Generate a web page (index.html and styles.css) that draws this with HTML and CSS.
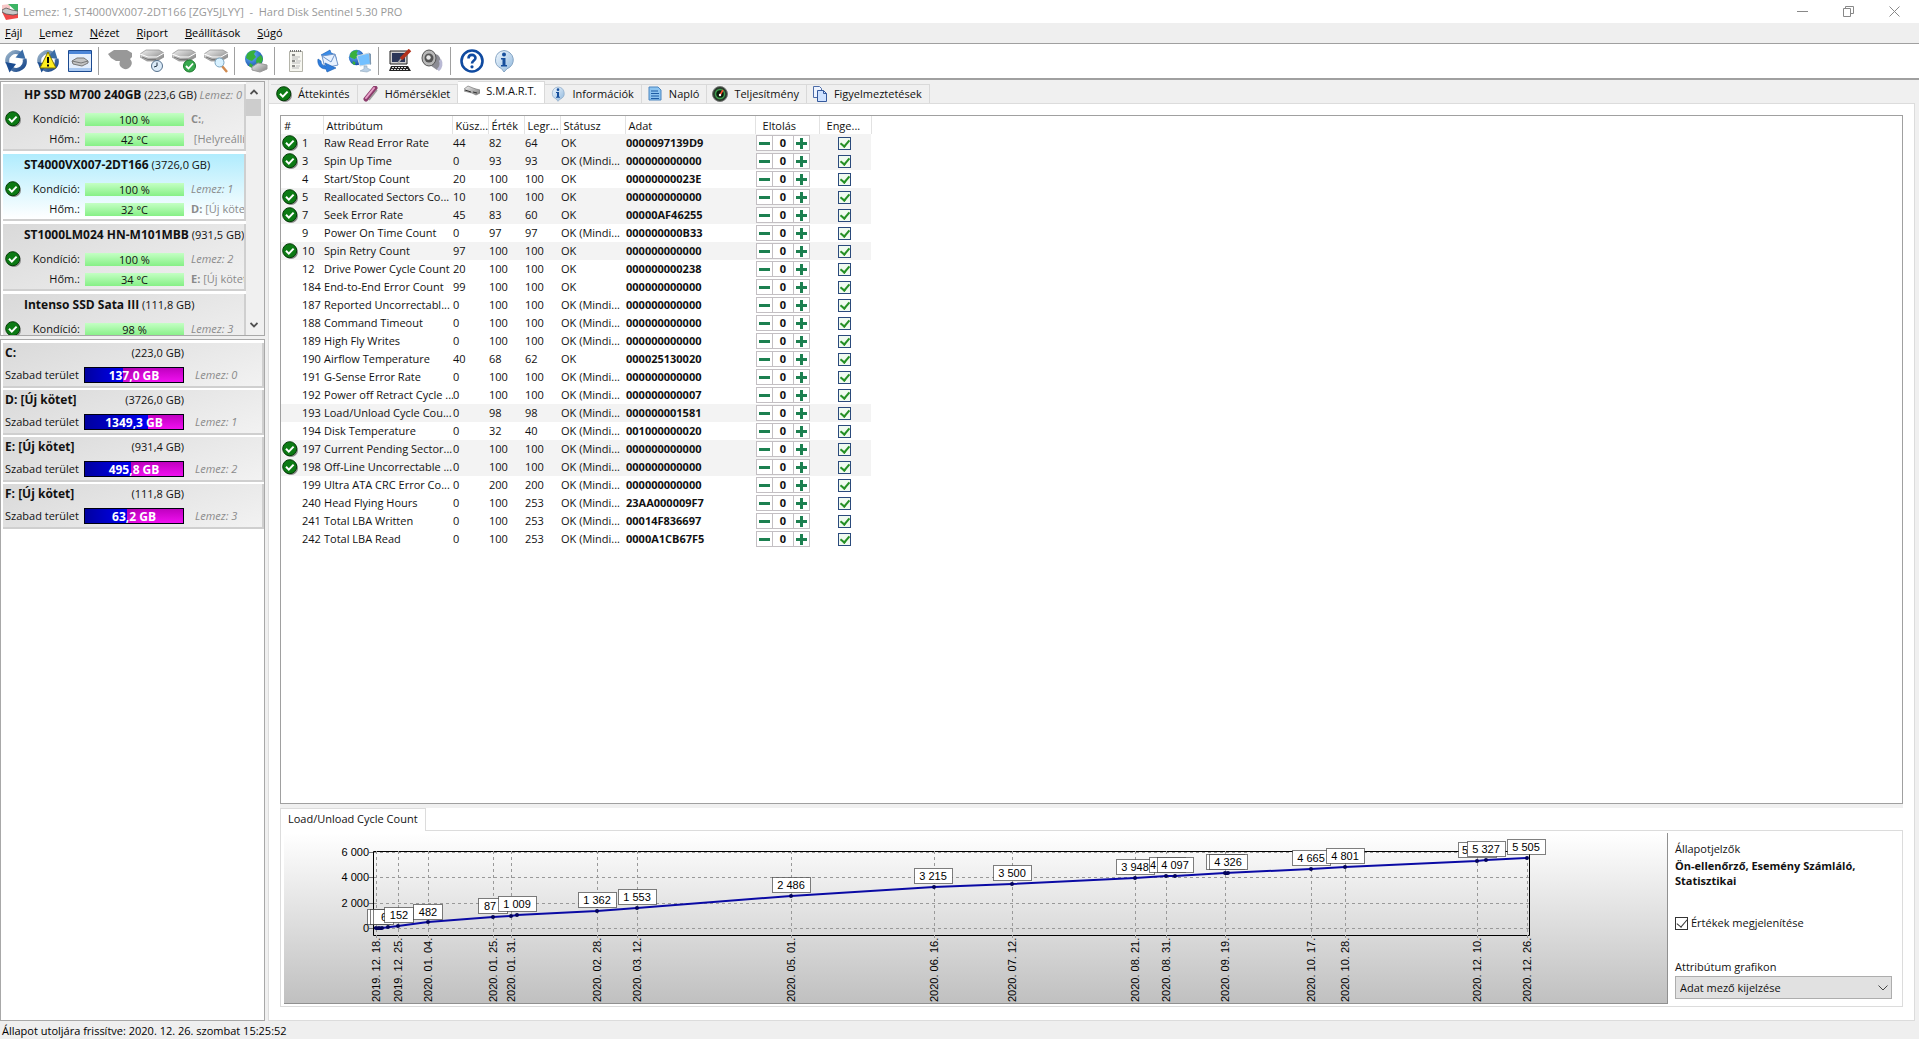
FILE: index.html
```html
<!DOCTYPE html>
<html lang="hu">
<head>
<meta charset="utf-8">
<title>Hard Disk Sentinel 5.30 PRO</title>
<link rel="stylesheet" href="styles.css">
</head>
<body>
<svg class="defs" aria-hidden="true">
  <defs>
    <linearGradient id="gBlue" gradientUnits="userSpaceOnUse" x1="2" y1="2" x2="22" y2="22"><stop offset="0" stop-color="#9fb8cc"/><stop offset="1" stop-color="#0e3f86"/></linearGradient>
    <linearGradient id="gDisk" x1="0" y1="0" x2="1" y2="1"><stop offset="0" stop-color="#f2f2f2"/><stop offset="1" stop-color="#7c7c7c"/></linearGradient>
    <linearGradient id="gBubble" x1="0" y1="0" x2="1" y2="1"><stop offset="0" stop-color="#f4faff"/><stop offset="1" stop-color="#8db6dc"/></linearGradient>
    <radialGradient id="gGlobe" cx=".35" cy=".3" r=".8"><stop offset="0" stop-color="#6fc0ff"/><stop offset="1" stop-color="#0b3fa0"/></radialGradient>
  </defs>
  <symbol id="ok" viewBox="0 0 16 16"><circle cx="9" cy="9" r="7" fill="#8a8a8a"/><circle cx="7.700" cy="7.700" r="7" fill="#0c7a14" stroke="#033c06"/><path d="M4 7.800l2.800 2.800 4.800-5" fill="none" stroke="#fff" stroke-width="2"/></symbol>
  <symbol id="refresh" viewBox="0 0 24 24"><path d="M3.500 14A8.600 8.600 0 0 1 16 4.300" fill="none" stroke="url(#gBlue)" stroke-width="4"/><path d="M18.500 0.500L21.500 10 11.500 8.500z" fill="#3a6ca6"/><path d="M20.500 10A8.600 8.600 0 0 1 8 19.700" fill="none" stroke="url(#gBlue)" stroke-width="4"/><path d="M5.500 23.500L1.500 13 12 15z" fill="#1b4c90"/></symbol>
  <symbol id="disk" viewBox="0 0 24 24"><path d="M0 5l6-4h13l5 3v4l-7 4H7L0 8z" fill="url(#gDisk)" stroke="#8a8a8a" stroke-width=".7"/><path d="M0 5l8 3h9l7-4" fill="none" stroke="#fff"/><path d="M2 8l6 2.500h8" fill="none" stroke="#777" stroke-width="1"/></symbol>
  <symbol id="smalldisk" viewBox="0 0 16 16"><path d="M0 6l4-3 5 2 3 1 4 1v3l-4 2-4-2-4-1-4-1z" fill="url(#gDisk)" stroke="#777" stroke-width=".7"/><path d="M1 7l6 2M9 9l4 1" stroke="#333" fill="none"/></symbol>
  <symbol id="globe" viewBox="0 0 20 20"><circle cx="10" cy="10" r="9" fill="url(#gGlobe)"/><path d="M3 5c3-4 7-4 9-3l-2 3 2 3-4 4-3-1-3-2zM13 9l4-3 2 4-2 5-4 1-1-4zM6 14l3 2-1 3-3-2z" fill="#38b03c"/></symbol>
  <symbol id="info" viewBox="0 0 24 24"><path d="M12 1.500a10 9.500 0 0 1 3 18.300L12 23l-2.500-3.400A10 9.500 0 0 1 12 1.500z" fill="url(#gBubble)" stroke="#86a5c4"/><circle cx="12" cy="5.500" r="2" fill="#174f9c"/><path d="M9 9h4.500v7H15v1.500H9V16h1.500v-5.500H9z" fill="#174f9c"/></symbol>
</svg>

<div class="app">
  <header class="titlebar">
    <svg class="app-icon" viewBox="0 0 16 16"><path d="M0 1l8-1v8H0z" fill="#f8c8c8"/><path d="M6 0h10v9z" fill="#3cb464"/><path d="M0 8h16v6l-12 2z" fill="#f04848"/><path d="M0 6l4-2 6 2 6 1v3l-5 1-7-1-4-2z" fill="#c8c8c8" stroke="#555" stroke-width=".8"/></svg>
    <h1 class="title">Lemez: 1, ST4000VX007-2DT166 [ZGY5JLYY] &nbsp;- &nbsp;Hard Disk Sentinel 5.30 PRO</h1>
    <div class="window-buttons">
      <button type="button" aria-label="Kis méret"><svg viewBox="0 0 11 11"><path d="M0 5.500h11" stroke="#888" fill="none"/></svg></button>
      <button type="button" aria-label="Előző méret"><svg viewBox="0 0 11 11"><path d="M.5 2.500h7v8h-7zM2.500 2.500v-2h8v7h-3" stroke="#888" fill="none"/></svg></button>
      <button type="button" aria-label="Bezárás"><svg viewBox="0 0 11 11"><path d="M.5.500l10 10M10.500.500l-10 10" stroke="#888" fill="none"/></svg></button>
    </div>
  </header>

  <nav class="menu">
    <a href="#"><u>F</u>ájl</a><a href="#"><u>L</u>emez</a><a href="#"><u>N</u>ézet</a><a href="#"><u>R</u>iport</a><a href="#"><u>B</u>eállítások</a><a href="#"><u>S</u>úgó</a>
  </nav>

  <div class="toolbar">
    <button type="button" aria-label="Frissítés"><svg viewBox="0 0 24 24"><use href="#refresh"/></svg></button>
    <button type="button" aria-label="Figyelmeztetés"><svg viewBox="0 0 24 24"><use href="#refresh"/><path d="M12 3l8 16H4z" fill="#ffef20" stroke="#807400"/><path d="M12 8v6M12 15.500v2" stroke="#000" stroke-width="2"/></svg></button>
    <button type="button" aria-label="Lemez"><svg viewBox="0 0 24 24"><path d="M.5 1.500h23v21H.5z" fill="#e4eefc" stroke="#1c4a90"/><path d="M1 2h22v3H1z" fill="#4c86d8"/><path d="M1 19h22v3H1z" fill="#a9c8f0"/><path d="M4 12l5-3h7l4 3v2l-6 3-9-2z" fill="#c4c4c4" stroke="#777"/><path d="M4 12l9 2 7-2" stroke="#777" fill="none"/></svg></button>
    <span class="sep"></span>
    <button type="button" aria-label="Leállítva"><svg viewBox="0 0 24 24"><path d="M0 5l6-4h13l5 3v4l-2 2a6 6 0 1 1-10 2H8L3 9z" fill="#989898"/></svg></button>
    <button type="button" aria-label="Ütemezés"><svg viewBox="0 0 24 24"><use href="#disk"/><circle cx="17" cy="17" r="5.500" fill="#dcebf8" stroke="#55708c"/><path d="M17 13.500V17l-3 1" stroke="#234" fill="none"/></svg></button>
    <button type="button" aria-label="Teszt"><svg viewBox="0 0 24 24"><use href="#disk"/><circle cx="17.500" cy="17" r="6" fill="#37a94d" stroke="#19772b"/><path d="M14 17l2.500 2.500 4.500-5" stroke="#fff" stroke-width="1.800" fill="none"/></svg></button>
    <button type="button" aria-label="Keresés"><svg viewBox="0 0 24 24"><use href="#disk"/><path d="M18 17l5 6" stroke="#d08a50" stroke-width="2.500"/><circle cx="15.500" cy="13.500" r="4.500" fill="#d8f1ff" stroke="#7aa4c0"/></svg></button>
    <span class="sep"></span>
    <button type="button" aria-label="Hálózat"><svg viewBox="0 0 24 24"><use href="#globe" width="20" height="20"/><path d="M8 18l6-4 9 2v4l-7 3-8-2z" fill="url(#gDisk)" stroke="#999"/></svg></button>
    <span class="sep"></span>
    <button type="button" aria-label="Riport"><svg viewBox="0 0 24 24"><path d="M5.500 2.500h13v20h-13z" fill="#f6f6f0" stroke="#b4b4aa"/><path d="M6 2h12" stroke="#777" stroke-width="2" stroke-dasharray="1 1"/><path d="M8 6h3M8 12h3M8 17h3" stroke="#222"/><path d="M8 8h8M8 10h6M12 12h5M8 14h8M12 17h4M8 19h7" stroke="#bbb"/></svg></button>
    <button type="button" aria-label="Küldés"><svg viewBox="0 0 24 24"><path d="M5 6l9-5 1 3c5 1 6 6 5 9l-3-2c1-3-1-4-3-4l1 3z" fill="#3a8ce8" stroke="#155bb0" stroke-width=".6"/><path d="M6 7l13-2 3 11-13 3z" fill="#e8f2ff" stroke="#6f94c8"/><path d="M6 7l9 6 4-8" fill="none" stroke="#6f94c8"/><path d="M20 19l-9 4-1-3c-6 0-9-5-8-10l3 2c0 3 2 5 5 5l-1-3z" fill="#2d7cdc" stroke="#155bb0" stroke-width=".6"/></svg></button>
    <button type="button" aria-label="Távoli gép"><svg viewBox="0 0 24 24"><use href="#globe" width="17" height="17"/><path d="M9 7l12-3 2 11-11 2z" fill="#73c0ff" stroke="#cfd8e0"/><path d="M21 4l2 1v10l-1 1z" fill="#7d97b0"/><path d="M16 17v3l-4 2 7 1 4-2-4-2v-2z" fill="#b9cfe4" stroke="#8fa8c0" stroke-width=".6"/></svg></button>
    <span class="sep"></span>
    <button type="button" aria-label="Beállítások"><svg viewBox="0 0 24 24"><path d="M2 2h17v13H2z" fill="#d0d0d0" stroke="#222"/><path d="M4 4h13v9H4z" fill="#2a3658"/><path d="M3 17h17l3 5H1z" fill="#222"/><path d="M4 18.500h15M3 20.500h17" stroke="#ddd" stroke-dasharray="2 1"/><path d="M22 1l-9 9" stroke="#b2321c" stroke-width="3.500"/><path d="M13 10l-3 4" stroke="#aaa" stroke-width="1.600"/></svg></button>
    <button type="button" aria-label="Hang"><svg viewBox="0 0 24 24"><path d="M8 2l10 4c5 5 3 13-1 15L7 14z" fill="#8c8c94"/><path d="M20 11c2 3 1 8-2 10" stroke="#b9b9d4" stroke-width="3" fill="none"/><ellipse cx="9" cy="9" rx="7" ry="8" fill="#b8b8b8" stroke="#555"/><circle cx="9" cy="9" r="4.500" fill="#555"/><circle cx="8.500" cy="8.500" r="2.200" fill="#e8e8e8"/></svg></button>
    <span class="sep"></span>
    <button type="button" aria-label="Súgó"><svg viewBox="0 0 24 24"><circle cx="12" cy="12" r="10.500" fill="#fff" stroke="#0f4aa0" stroke-width="2.600"/><path d="M8.500 9.500c0-5 7-4.500 7-.5 0 2.500-3.500 2.500-3.500 5.500" fill="none" stroke="#0f4aa0" stroke-width="2.600"/><circle cx="12" cy="17.800" r="1.600" fill="#0f4aa0"/></svg></button>
    <button type="button" aria-label="Információ"><svg viewBox="0 0 24 24"><use href="#info"/></svg></button>
  </div>

  <main class="main">
    <aside class="sidebar">
      <section class="disk-list">
        <div class="disks">
          <article class="disk">
            <h2 class="disk-name"><b>HP SSD M700 240GB</b> (223,6 GB) <i>Lemez: 0</i></h2>
            <svg class="ok"><use href="#ok"/></svg>
            <span class="lbl">Kondíció:</span><span class="bar">100 %</span><span class="note"><b>C:</b>,</span>
            <span class="lbl">Hőm.:</span><span class="bar">42 °C</span><span class="note">&nbsp;[Helyreállítás]</span>
          </article>
          <article class="disk selected">
            <h2 class="disk-name"><b>ST4000VX007-2DT166</b> (3726,0 GB)</h2>
            <svg class="ok"><use href="#ok"/></svg>
            <span class="lbl">Kondíció:</span><span class="bar">100 %</span><span class="note"><i>Lemez: 1</i></span>
            <span class="lbl">Hőm.:</span><span class="bar">32 °C</span><span class="note"><b>D:</b> [Új kötet]</span>
          </article>
          <article class="disk">
            <h2 class="disk-name"><b>ST1000LM024 HN-M101MBB</b> (931,5 GB)</h2>
            <svg class="ok"><use href="#ok"/></svg>
            <span class="lbl">Kondíció:</span><span class="bar">100 %</span><span class="note"><i>Lemez: 2</i></span>
            <span class="lbl">Hőm.:</span><span class="bar">34 °C</span><span class="note"><b>E:</b> [Új kötet]</span>
          </article>
          <article class="disk">
            <h2 class="disk-name"><b>Intenso SSD Sata III</b> (111,8 GB)</h2>
            <svg class="ok"><use href="#ok"/></svg>
            <span class="lbl">Kondíció:</span><span class="bar">98 %</span><span class="note"><i>Lemez: 3</i></span>
          </article>
        </div>
        <div class="scrollbar">
          <button type="button" aria-label="Fel"><svg viewBox="0 0 8 6"><path d="M.5 5L4 1.500 7.500 5" fill="none" stroke="#505050" stroke-width="1.800"/></svg></button>
          <div class="thumb"></div>
          <button type="button" aria-label="Le"><svg viewBox="0 0 8 6"><path d="M.5 1L4 4.500 7.500 1" fill="none" stroke="#505050" stroke-width="1.800"/></svg></button>
        </div>
      </section>
      <section class="volumes">
        <article class="volume"><b>C:</b><span class="size">(223,0 GB)</span><span class="free">Szabad terület</span><span class="usage"><span class="used" style="width:39%"></span><b>137,0 GB</b></span><i>Lemez: 0</i></article>
        <article class="volume"><b>D: [Új kötet]</b><span class="size">(3726,0 GB)</span><span class="free">Szabad terület</span><span class="usage"><span class="used" style="width:64%"></span><b>1349,3 GB</b></span><i>Lemez: 1</i></article>
        <article class="volume"><b>E: [Új kötet]</b><span class="size">(931,4 GB)</span><span class="free">Szabad terület</span><span class="usage"><span class="used" style="width:47%"></span><b>495,8 GB</b></span><i>Lemez: 2</i></article>
        <article class="volume"><b>F: [Új kötet]</b><span class="size">(111,8 GB)</span><span class="free">Szabad terület</span><span class="usage"><span class="used" style="width:43%"></span><b>63,2 GB</b></span><i>Lemez: 3</i></article>
      </section>
    </aside>

    <div class="content">
      <nav class="tabs">
        <a class="tab" href="#"><svg viewBox="0 0 16 16"><use href="#ok"/></svg>Áttekintés</a>
        <a class="tab" href="#"><svg viewBox="0 0 16 16"><path d="M3 13L12 2" stroke="#8c3c6c" stroke-width="5" stroke-linecap="round"/><path d="M3 12L11 2" stroke="#e8a0c8" stroke-width="2" stroke-linecap="round"/><path d="M6 14l8-10" stroke="#999" stroke-width="1.500"/></svg>Hőmérséklet</a>
        <a class="tab active" href="#"><svg viewBox="0 0 16 16"><use href="#smalldisk"/></svg>S.M.A.R.T.</a>
        <a class="tab" href="#"><svg viewBox="0 0 24 24"><use href="#info"/></svg>Információk</a>
        <a class="tab" href="#"><svg viewBox="0 0 16 16"><path d="M2 1h9l3 3v10H2z" fill="#8cc4f0" stroke="#4c86c0"/><path d="M4 5h7M4 7.500h8M4 10h8M4 12.500h8" stroke="#1c5ca4"/></svg>Napló</a>
        <a class="tab" href="#"><svg viewBox="0 0 16 16"><circle cx="8" cy="8" r="7.500" fill="#2a3a2c" stroke="#777"/><circle cx="8" cy="8" r="4.500" fill="#0a1a0a" stroke="#3c9c4c" stroke-width="1.500"/><path d="M8 9l3-5" stroke="#ff5030" stroke-width="1.500"/><circle cx="8" cy="9" r="1.200" fill="#fff"/></svg>Teljesítmény</a>
        <a class="tab" href="#"><svg viewBox="0 0 16 16"><path d="M1.500.500h6l2 2v9h-8z" fill="#eef4ff" stroke="#4c6ca8"/><path d="M5.500 4.500h6l3 3v8h-9z" fill="#cfe2ff" stroke="#34589c"/><path d="M11.500 4.500v3h3" fill="none" stroke="#34589c"/></svg>Figyelmeztetések</a>
      </nav>

      <div class="page">
        <section class="list">
          <table class="smart">
            <colgroup><col class="c-icon"><col class="c-id"><col class="c-name"><col class="c-num"><col class="c-num"><col class="c-num"><col class="c-status"><col class="c-data"><col class="c-offset"><col class="c-on"></colgroup>
            <thead><tr><th colspan="2">#</th><th>Attribútum</th><th>Küsz...</th><th>Érték</th><th>Legr...</th><th>Státusz</th><th>Adat</th><th class="wide">Eltolás</th><th class="wide">Enge...</th></tr></thead>
            <tbody>
              <tr class="hl"><td><svg class="ok"><use href="#ok"/></svg></td><td>1</td><td>Raw Read Error Rate</td><td>44</td><td>82</td><td>64</td><td>OK</td><td>0000097139D9</td><td><div class="step"><button type="button" aria-label="Csökkent"></button><output>0</output><button type="button" class="plus" aria-label="Növel"></button></div></td><td><input type="checkbox" aria-label="Engedélyezve 1" checked></td></tr>
              <tr class="hl"><td><svg class="ok"><use href="#ok"/></svg></td><td>3</td><td>Spin Up Time</td><td>0</td><td>93</td><td>93</td><td>OK (Mindi...</td><td>000000000000</td><td><div class="step"><button type="button" aria-label="Csökkent"></button><output>0</output><button type="button" class="plus" aria-label="Növel"></button></div></td><td><input type="checkbox" aria-label="Engedélyezve 3" checked></td></tr>
              <tr><td></td><td>4</td><td>Start/Stop Count</td><td>20</td><td>100</td><td>100</td><td>OK</td><td>00000000023E</td><td><div class="step"><button type="button" aria-label="Csökkent"></button><output>0</output><button type="button" class="plus" aria-label="Növel"></button></div></td><td><input type="checkbox" aria-label="Engedélyezve 4" checked></td></tr>
              <tr class="hl"><td><svg class="ok"><use href="#ok"/></svg></td><td>5</td><td>Reallocated Sectors Co...</td><td>10</td><td>100</td><td>100</td><td>OK</td><td>000000000000</td><td><div class="step"><button type="button" aria-label="Csökkent"></button><output>0</output><button type="button" class="plus" aria-label="Növel"></button></div></td><td><input type="checkbox" aria-label="Engedélyezve 5" checked></td></tr>
              <tr class="hl"><td><svg class="ok"><use href="#ok"/></svg></td><td>7</td><td>Seek Error Rate</td><td>45</td><td>83</td><td>60</td><td>OK</td><td>00000AF46255</td><td><div class="step"><button type="button" aria-label="Csökkent"></button><output>0</output><button type="button" class="plus" aria-label="Növel"></button></div></td><td><input type="checkbox" aria-label="Engedélyezve 7" checked></td></tr>
              <tr><td></td><td>9</td><td>Power On Time Count</td><td>0</td><td>97</td><td>97</td><td>OK (Mindi...</td><td>000000000B33</td><td><div class="step"><button type="button" aria-label="Csökkent"></button><output>0</output><button type="button" class="plus" aria-label="Növel"></button></div></td><td><input type="checkbox" aria-label="Engedélyezve 9" checked></td></tr>
              <tr class="hl"><td><svg class="ok"><use href="#ok"/></svg></td><td>10</td><td>Spin Retry Count</td><td>97</td><td>100</td><td>100</td><td>OK</td><td>000000000000</td><td><div class="step"><button type="button" aria-label="Csökkent"></button><output>0</output><button type="button" class="plus" aria-label="Növel"></button></div></td><td><input type="checkbox" aria-label="Engedélyezve 10" checked></td></tr>
              <tr><td></td><td>12</td><td>Drive Power Cycle Count</td><td>20</td><td>100</td><td>100</td><td>OK</td><td>000000000238</td><td><div class="step"><button type="button" aria-label="Csökkent"></button><output>0</output><button type="button" class="plus" aria-label="Növel"></button></div></td><td><input type="checkbox" aria-label="Engedélyezve 12" checked></td></tr>
              <tr><td></td><td>184</td><td>End-to-End Error Count</td><td>99</td><td>100</td><td>100</td><td>OK</td><td>000000000000</td><td><div class="step"><button type="button" aria-label="Csökkent"></button><output>0</output><button type="button" class="plus" aria-label="Növel"></button></div></td><td><input type="checkbox" aria-label="Engedélyezve 184" checked></td></tr>
              <tr><td></td><td>187</td><td>Reported Uncorrectabl...</td><td>0</td><td>100</td><td>100</td><td>OK (Mindi...</td><td>000000000000</td><td><div class="step"><button type="button" aria-label="Csökkent"></button><output>0</output><button type="button" class="plus" aria-label="Növel"></button></div></td><td><input type="checkbox" aria-label="Engedélyezve 187" checked></td></tr>
              <tr><td></td><td>188</td><td>Command Timeout</td><td>0</td><td>100</td><td>100</td><td>OK (Mindi...</td><td>000000000000</td><td><div class="step"><button type="button" aria-label="Csökkent"></button><output>0</output><button type="button" class="plus" aria-label="Növel"></button></div></td><td><input type="checkbox" aria-label="Engedélyezve 188" checked></td></tr>
              <tr><td></td><td>189</td><td>High Fly Writes</td><td>0</td><td>100</td><td>100</td><td>OK (Mindi...</td><td>000000000000</td><td><div class="step"><button type="button" aria-label="Csökkent"></button><output>0</output><button type="button" class="plus" aria-label="Növel"></button></div></td><td><input type="checkbox" aria-label="Engedélyezve 189" checked></td></tr>
              <tr><td></td><td>190</td><td>Airflow Temperature</td><td>40</td><td>68</td><td>62</td><td>OK</td><td>000025130020</td><td><div class="step"><button type="button" aria-label="Csökkent"></button><output>0</output><button type="button" class="plus" aria-label="Növel"></button></div></td><td><input type="checkbox" aria-label="Engedélyezve 190" checked></td></tr>
              <tr><td></td><td>191</td><td>G-Sense Error Rate</td><td>0</td><td>100</td><td>100</td><td>OK (Mindi...</td><td>000000000000</td><td><div class="step"><button type="button" aria-label="Csökkent"></button><output>0</output><button type="button" class="plus" aria-label="Növel"></button></div></td><td><input type="checkbox" aria-label="Engedélyezve 191" checked></td></tr>
              <tr><td></td><td>192</td><td>Power off Retract Cycle ...</td><td>0</td><td>100</td><td>100</td><td>OK (Mindi...</td><td>000000000007</td><td><div class="step"><button type="button" aria-label="Csökkent"></button><output>0</output><button type="button" class="plus" aria-label="Növel"></button></div></td><td><input type="checkbox" aria-label="Engedélyezve 192" checked></td></tr>
              <tr class="hl"><td></td><td>193</td><td>Load/Unload Cycle Cou...</td><td>0</td><td>98</td><td>98</td><td>OK (Mindi...</td><td>000000001581</td><td><div class="step"><button type="button" aria-label="Csökkent"></button><output>0</output><button type="button" class="plus" aria-label="Növel"></button></div></td><td><input type="checkbox" aria-label="Engedélyezve 193" checked></td></tr>
              <tr><td></td><td>194</td><td>Disk Temperature</td><td>0</td><td>32</td><td>40</td><td>OK (Mindi...</td><td>001000000020</td><td><div class="step"><button type="button" aria-label="Csökkent"></button><output>0</output><button type="button" class="plus" aria-label="Növel"></button></div></td><td><input type="checkbox" aria-label="Engedélyezve 194" checked></td></tr>
              <tr class="hl"><td><svg class="ok"><use href="#ok"/></svg></td><td>197</td><td>Current Pending Sector...</td><td>0</td><td>100</td><td>100</td><td>OK (Mindi...</td><td>000000000000</td><td><div class="step"><button type="button" aria-label="Csökkent"></button><output>0</output><button type="button" class="plus" aria-label="Növel"></button></div></td><td><input type="checkbox" aria-label="Engedélyezve 197" checked></td></tr>
              <tr class="hl"><td><svg class="ok"><use href="#ok"/></svg></td><td>198</td><td>Off-Line Uncorrectable ...</td><td>0</td><td>100</td><td>100</td><td>OK (Mindi...</td><td>000000000000</td><td><div class="step"><button type="button" aria-label="Csökkent"></button><output>0</output><button type="button" class="plus" aria-label="Növel"></button></div></td><td><input type="checkbox" aria-label="Engedélyezve 198" checked></td></tr>
              <tr><td></td><td>199</td><td>Ultra ATA CRC Error Co...</td><td>0</td><td>200</td><td>200</td><td>OK (Mindi...</td><td>000000000000</td><td><div class="step"><button type="button" aria-label="Csökkent"></button><output>0</output><button type="button" class="plus" aria-label="Növel"></button></div></td><td><input type="checkbox" aria-label="Engedélyezve 199" checked></td></tr>
              <tr><td></td><td>240</td><td>Head Flying Hours</td><td>0</td><td>100</td><td>253</td><td>OK (Mindi...</td><td>23AA000009F7</td><td><div class="step"><button type="button" aria-label="Csökkent"></button><output>0</output><button type="button" class="plus" aria-label="Növel"></button></div></td><td><input type="checkbox" aria-label="Engedélyezve 240" checked></td></tr>
              <tr><td></td><td>241</td><td>Total LBA Written</td><td>0</td><td>100</td><td>253</td><td>OK (Mindi...</td><td>00014F836697</td><td><div class="step"><button type="button" aria-label="Csökkent"></button><output>0</output><button type="button" class="plus" aria-label="Növel"></button></div></td><td><input type="checkbox" aria-label="Engedélyezve 241" checked></td></tr>
              <tr><td></td><td>242</td><td>Total LBA Read</td><td>0</td><td>100</td><td>253</td><td>OK (Mindi...</td><td>0000A1CB67F5</td><td><div class="step"><button type="button" aria-label="Csökkent"></button><output>0</output><button type="button" class="plus" aria-label="Növel"></button></div></td><td><input type="checkbox" aria-label="Engedélyezve 242" checked></td></tr>
            </tbody>
          </table>
        </section>

        <div class="splitter"></div>
        <div class="subtabs"><a class="subtab" href="#">Load/Unload Cycle Count</a></div>
        <section class="graph-panel">
          <div class="graph">
            <svg class="chart" viewBox="0 0 1382 170" preserveAspectRatio="xMinYMid meet" role="img" aria-label="Load/Unload Cycle Count">
              <path class="frame" d="M89.500 18.500H1245.500V102.500H89.500z"/>
              <path class="tick" d="M85 19.500h4M85 44.500h4M85 70.500h4M85 95.500h4"/>
              <path class="grid" d="M90 19.500H1245M90 44.500H1245M90 70.500H1245M90 95.500H1245"/>
              <path class="grid" d="M92.500 18v88M114.500 18v88M144.500 18v88M209.500 18v88M227.500 18v88M313.500 18v88M353.500 18v88M507.500 18v88M650.500 18v88M728.500 18v88M851.500 18v88M882.500 18v88M941.500 18v88M1027.500 18v88M1061.500 18v88M1193.500 18v88M1243.500 18v88"/>
              <polyline class="line" points="90,95 98,95 114,93 144,89 209,84 227,83 233,82 313,78 353,75 507,63 650,54 728,51 851,45 882,43 891,43 941,40 1027,36 1061,34 1193,28 1202,27 1243,25"/>
              <path class="dots" d="M92 95h0M95 95h0M98 95h0M104 94h0M114 93h0M144 89h0M209 84h0M227 83h0M233 82h0M313 78h0M353 75h0M507 63h0M650 54h0M728 51h0M851 45h0M882 43h0M891 43h0M941 40h0M944 40h0M1027 36h0M1061 34h0M1193 28h0M1202 27h0M1243 25h0"/>
              <g class="marks">
                <rect x="83.500" y="76.500" width="20" height="15"/><rect x="86.500" y="76.500" width="20" height="15"/><rect x="89.500" y="76.500" width="20" height="15"/><text x="100" y="88">6</text>
                <rect x="100.500" y="74.500" width="29" height="15"/><text x="115" y="86">152</text>
                <rect x="129.500" y="71.500" width="29" height="15"/><text x="144" y="83">482</text>
                <rect x="194.500" y="65.500" width="29" height="15"/><text x="206" y="77">87</text>
                <rect x="214.500" y="63.500" width="38" height="15"/><text x="233" y="75">1 009</text>
                <rect x="294.500" y="59.500" width="38" height="15"/><text x="313" y="71">1 362</text>
                <rect x="334.500" y="56.500" width="38" height="15"/><text x="353" y="68">1 553</text>
                <rect x="488.500" y="44.500" width="38" height="15"/><text x="507" y="56">2 486</text>
                <rect x="630.500" y="35.500" width="38" height="15"/><text x="649" y="47">3 215</text>
                <rect x="709.500" y="32.500" width="38" height="15"/><text x="728" y="44">3 500</text>
                <rect x="832.500" y="26.500" width="38" height="15"/><text x="851" y="38">3 948</text>
                <rect x="865.500" y="24.500" width="36" height="15"/><text x="869" y="36">4</text>
                <rect x="873.500" y="24.500" width="36" height="15"/><text x="891" y="36">4 097</text>
                <rect x="922.500" y="21.500" width="38" height="15"/><rect x="925.500" y="21.500" width="38" height="15"/><text x="944" y="33">4 326</text>
                <rect x="1008.500" y="17.500" width="38" height="15"/><text x="1027" y="29">4 665</text>
                <rect x="1042.500" y="15.500" width="38" height="15"/><text x="1061" y="27">4 801</text>
                <rect x="1174.500" y="9.500" width="38" height="15"/><text x="1181" y="21">5</text>
                <rect x="1183.500" y="8.500" width="38" height="15"/><text x="1202" y="20">5 327</text>
                <rect x="1223.500" y="6.500" width="38" height="15"/><text x="1242" y="18">5 505</text>
              </g>
              <g class="ylabels"><text x="85" y="23">6 000</text><text x="85" y="48">4 000</text><text x="85" y="74">2 000</text><text x="85" y="99">0</text></g>
              <g class="xlabels">
                <text transform="translate(96 169) rotate(-90)">2019. 12. 18.</text><text transform="translate(118 169) rotate(-90)">2019. 12. 25.</text><text transform="translate(148 169) rotate(-90)">2020. 01. 04.</text><text transform="translate(213 169) rotate(-90)">2020. 01. 25.</text><text transform="translate(231 169) rotate(-90)">2020. 01. 31.</text><text transform="translate(317 169) rotate(-90)">2020. 02. 28.</text><text transform="translate(357 169) rotate(-90)">2020. 03. 12.</text><text transform="translate(511 169) rotate(-90)">2020. 05. 01.</text><text transform="translate(654 169) rotate(-90)">2020. 06. 16.</text><text transform="translate(732 169) rotate(-90)">2020. 07. 12.</text><text transform="translate(855 169) rotate(-90)">2020. 08. 21.</text><text transform="translate(886 169) rotate(-90)">2020. 08. 31.</text><text transform="translate(945 169) rotate(-90)">2020. 09. 19.</text><text transform="translate(1031 169) rotate(-90)">2020. 10. 17.</text><text transform="translate(1065 169) rotate(-90)">2020. 10. 28.</text><text transform="translate(1197 169) rotate(-90)">2020. 12. 10.</text><text transform="translate(1247 169) rotate(-90)">2020. 12. 26.</text>
              </g>
            </svg>
          </div>
          <form class="options">
            <p>Állapotjelzők</p>
            <p class="flags">Ön-ellenőrző, Esemény Számláló, Statisztikai</p>
            <label class="check"><input type="checkbox" checked>Értékek megjelenítése</label>
            <label for="mode">Attribútum grafikon</label>
            <div class="select"><select id="mode"><option>Adat mező kijelzése</option></select><svg viewBox="0 0 10 6"><path d="M.5.500L5 5 9.500.500" fill="none" stroke="#444"/></svg></div>
          </form>
        </section>
      </div>
    </div>
  </main>

  <footer class="status">Állapot utoljára frissítve: 2020. 12. 26. szombat 15:25:52</footer>
</div>
</body>
</html>
```
FILE: styles.css
```css
* { box-sizing: border-box; }
body { margin: 0; background: #f0f0f0; color: #111; font: 11px/18px "Open Sans", "Noto Sans", sans-serif; }
h1, h2, p { margin: 0; font-size: 11px; font-weight: normal; }
a { color: inherit; text-decoration: none; }
button { padding: 0; border: 0; background: none; display: flex; align-items: center; justify-content: center; }
.defs { position: absolute; width: 0; height: 0; }
.ok { width: 16px; height: 16px; display: block; }

.app { display: flex; flex-direction: column; min-height: 100vh; }

.titlebar { display: flex; align-items: center; height: 23px; padding: 0 19px 0 2px; background: #fff; color: #999; }
.app-icon { width: 16px; height: 16px; margin-right: 5px; }
.title { flex: 1; }
.window-buttons { display: flex; gap: 35px; }
.window-buttons svg { width: 11px; height: 11px; }

.menu { display: flex; gap: 17px; height: 20px; padding: 0 5px; line-height: 20px; background: #efefef; color: #000; }
.toolbar { display: flex; align-items: center; height: 37px; border-top: 1px solid #a0a0a0; border-bottom: 2px solid #a0a0a0; background: #fff; }
.toolbar button { width: 32px; height: 32px; }
.toolbar svg { width: 24px; height: 24px; }
.sep { width: 1px; height: 28px; margin: 0 5px 0 2px; background: #a0a0a0; }

.main { flex: 1; display: grid; grid-template-columns: 265px minmax(0, 1fr); gap: 3px; }
.sidebar { display: flex; flex-direction: column; gap: 3px; padding-top: 1px; }

.disk-list { display: flex; height: 255px; border: 1px solid #a8a8a8; background: #fff; }
.disks { flex: 1; display: flex; flex-direction: column; gap: 3px; padding: 2px 0 0 2px; overflow: hidden; }
.disk { flex: none; display: grid; grid-template-columns: 17px 58px 99px minmax(0, 1fr); grid-template-rows: 25px 20px 20px; align-items: center; height: 67px; padding-left: 2px; border-right: 2px solid #cfcfcf; border-bottom: 2px solid #cfcfcf; background: linear-gradient(160deg, #d9d9d9, #f2f2f2); white-space: nowrap; overflow: hidden; }
.disk.selected { background: linear-gradient(#b0ecfd, #fff); }
.disk-name { grid-column: 1 / -1; padding: 0 0 4px 19px; }
.disk-name b, .volume b { font-size: 12px; }
.disk i, .note { color: #8a8a8a; }
.disk .lbl { grid-column: 2; text-align: right; }
.disk .bar { margin-left: 5px; margin-right: -5px; height: 13px; line-height: 13px; text-align: center; background: linear-gradient(#c4ffc4, #86f086); }
.disk .note { padding-left: 12px; }
.scrollbar { width: 18px; padding: 3px 3px 3px 0; display: flex; flex-direction: column; background: #f0f0f0; }
.scrollbar button { height: 14px; }
.scrollbar svg { width: 8px; height: 6px; }
.thumb { height: 17px; margin-bottom: auto; background: #cdcdcd; }

.volumes { flex: 1; display: flex; flex-direction: column; gap: 2px; padding: 3px 0 2px 2px; border: 1px solid #a8a8a8; background: #fff; }
.volume { display: grid; grid-template-columns: 79px 100px 1fr; grid-template-rows: 20px 23px; align-items: center; height: 45px; padding-left: 2px; border-right: 2px solid #cfcfcf; border-bottom: 2px solid #cfcfcf; background: linear-gradient(160deg, #d9d9d9, #f2f2f2); white-space: nowrap; }
.volume .size { text-align: right; }
.volume .free { grid-column: 1; }
.volume .usage { position: relative; height: 16px; border: 1px solid #001; background: linear-gradient(90deg, rgba(0, 0, 0, .35), rgba(0, 0, 0, 0) 60%), linear-gradient(#c000c0, #f010f0); color: #fff; line-height: 15px; text-align: center; }
.used { position: absolute; inset: 0 auto 0 0; background: linear-gradient(90deg, #0000a0, #0000f0); }
.usage b { position: relative; }
.volume i { padding-left: 11px; color: #8a8a8a; }

.content { display: flex; flex-direction: column; padding-right: 4px; border-left: 1px solid #dcdcdc; }
.tabs { display: flex; align-items: flex-end; height: 23px; padding-left: 2px; }
.tab { display: flex; align-items: center; gap: 6px; height: 19px; padding: 0 7px 0 5px; border: 1px solid #d9d9d9; border-width: 1px 1px 0 0; white-space: nowrap; }
.tab svg { width: 16px; height: 16px; }
.tab.active { height: 22px; padding: 0 8px 4px 6px; background: #fff; }

.page { flex: 1; display: flex; flex-direction: column; padding: 11px 11px 13px; border: 1px solid #dcdcdc; border-left: 0; background: #fff; }
.list { flex: 1; border: 1px solid #a0a0a0; }
.smart { width: 590px; table-layout: fixed; border-collapse: collapse; white-space: nowrap; color: #111; }
.c-icon { width: 20px; } .c-id { width: 22px; } .c-name { width: 129px; } .c-data { width: 130px; } .c-num { width: 36px; } .c-status { width: 65px; } .c-offset { width: 64px; } .c-on { width: 52px; }
.smart th { height: 18px; padding: 0 0 0 3px; border-right: 1px solid #e2e2e2; font-weight: normal; line-height: 16px; text-align: left; vertical-align: bottom; }
.smart th.wide { padding-left: 7px; }
.smart td { height: 18px; padding: 0 0 0 1px; line-height: 16px; }
.smart td:nth-child(8) { font-weight: bold; }
.smart .hl { background: #f3f3f3; }
.step { display: flex; width: 54px; height: 16px; border: 1px solid #c3bfc3; background: #fff; }
.step output { flex: 1; border: 1px solid #c3bfc3; border-width: 0 1px; line-height: 14px; text-align: center; font-weight: bold; }
.step button { width: 15px; background: linear-gradient(#1c8050, #1c8050) center / 11px 3px no-repeat; }
.step .plus { background: linear-gradient(#1c8050, #1c8050) center / 11px 3px no-repeat, linear-gradient(#1c8050, #1c8050) center / 3px 11px no-repeat; }
input[type="checkbox"] { appearance: none; display: grid; place-items: center; width: 13px; height: 13px; margin: 0; border: 1px solid #333; background: #fff; }
input[type="checkbox"]::before { content: ""; width: 5px; height: 9px; margin-top: -3px; border: solid #333; border-width: 0 1px 1px 0; transform: rotate(40deg); }
.smart input[type="checkbox"] { margin-left: 18px; border-color: #2b4a7c; background: #f0faf0; }
.smart input[type="checkbox"]::before { width: 4px; height: 7px; margin-top: -2px; border-color: #259025; border-width: 0 2px 2px 0; }

.splitter { height: 4px; background: #f0f0f0; }
.subtabs { display: flex; height: 22px; }
.subtab { z-index: 1; padding: 1px 7px; border: 1px solid #dcdcdc; border-bottom: 0; margin-bottom: -1px; background: #fff; }
.graph-panel { display: flex; min-height: 177px; padding: 2px 3px; border: 1px solid #dcdcdc; }
.graph { flex: 1; border-right: 1px solid #909090; border-bottom: 1px solid #909090; background: linear-gradient(#fff, #c0c0c0); }
.chart { display: block; width: 100%; height: 170px; font: 11px "Liberation Sans", Arial, sans-serif; }
.frame { fill: none; stroke: #000; }
.tick { stroke: #777; }
.grid { fill: none; stroke: #999; stroke-dasharray: 3 3; }
.line { fill: none; stroke: #0a0aa4; stroke-width: 2; }
.dots { stroke: #04045c; stroke-width: 4; stroke-linecap: round; }
.marks rect { fill: #fff; stroke: #000; stroke-dasharray: 1 1; }
.marks text { text-anchor: middle; }
.ylabels text { text-anchor: end; }

.options { display: flex; flex-direction: column; width: 231px; padding: 7px 7px 0; line-height: 18px; }
.flags { font-weight: bold; line-height: 15px; }
.check { display: flex; align-items: center; gap: 3px; margin: 26px 0; }
.select { position: relative; width: 217px; }
.select select { appearance: none; display: block; width: 100%; height: 23px; padding: 0 4px; border: 1px solid #adadad; border-radius: 0; background: #e1e1e1; color: #111; font: inherit; }
.select svg { position: absolute; right: 4px; top: 9px; width: 10px; height: 6px; pointer-events: none; }

.status { height: 18px; padding-left: 2px; line-height: 20px; background: #efefef; color: #000; }
```
